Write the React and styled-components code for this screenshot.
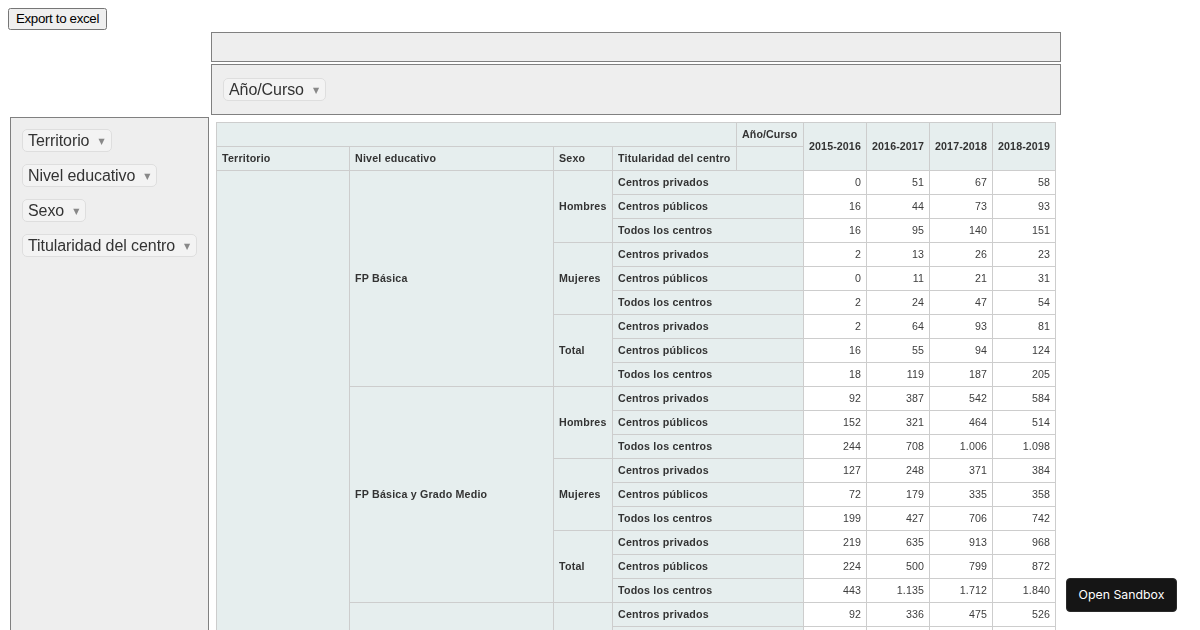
import React from "react";
import styled, { createGlobalStyle } from "styled-components";

const GlobalStyle = createGlobalStyle`
  html, body {
    height: 630px;
    overflow: hidden;
  }
  body {
    margin: 8px;
    font-family: "Liberation Sans", Arial, sans-serif;
  }
`;

const COL_WIDTHS = [133, 204, 59, 124, 67, 63, 63, 63, 63];
const YEARS = ["2015-2016", "2016-2017", "2017-2018", "2018-2019"];
const CENTROS = ["Centros privados", "Centros públicos", "Todos los centros"];

const GROUPS = [
  {
    nivel: "FP Básica",
    sexos: [
      { sexo: "Hombres", rows: [["0", "51", "67", "58"], ["16", "44", "73", "93"], ["16", "95", "140", "151"]] },
      { sexo: "Mujeres", rows: [["2", "13", "26", "23"], ["0", "11", "21", "31"], ["2", "24", "47", "54"]] },
      { sexo: "Total", rows: [["2", "64", "93", "81"], ["16", "55", "94", "124"], ["18", "119", "187", "205"]] },
    ],
  },
  {
    nivel: "FP Básica y Grado Medio",
    sexos: [
      { sexo: "Hombres", rows: [["92", "387", "542", "584"], ["152", "321", "464", "514"], ["244", "708", "1.006", "1.098"]] },
      { sexo: "Mujeres", rows: [["127", "248", "371", "384"], ["72", "179", "335", "358"], ["199", "427", "706", "742"]] },
      { sexo: "Total", rows: [["219", "635", "913", "968"], ["224", "500", "799", "872"], ["443", "1.135", "1.712", "1.840"]] },
    ],
  },
];

// the third group runs past the bottom of the page, only its first row has readable text
const CUT_ROW = ["92", "336", "475", "526"];

const Toolbar = styled.div`
  height: 22px;
`;

const ExportButton = styled.button`
  box-sizing: border-box;
  width: 99px;
  height: 22px;
  padding: 0 0 2px;
  font-family: "Liberation Sans", Arial, sans-serif;
  font-size: 13.33px;
  letter-spacing: -0.34px;
`;

const PivotUi = styled.table`
  table-layout: fixed;
  width: 1053px;
  will-change: transform;
`;

const AxisCell = styled.td`
  box-sizing: border-box;
  height: ${(p) => p.$height || "auto"};
  padding: ${(p) => p.$pad || "5px"};
  background: #eeeeee;
  border: 1px solid #808080;
  vertical-align: top;
`;

const OutputCell = styled.td`
  padding: 5px;
  vertical-align: top;
`;

const AttrList = styled.ul`
  list-style: none;
  margin: 0;
  padding: 0;
`;

const AttrItem = styled.li`
  height: 19px;
  padding: 8px 6px;
  font-size: 16px;
  line-height: 19px;
  letter-spacing: -0.08px;
  white-space: nowrap;
`;

const Attr = styled.span`
  padding: 2px 5px;
  background: #f3f3f3;
  border: 1px solid #dedede;
  border-radius: 5px;
  color: #333333;
`;

const Triangle = styled.span`
  position: relative;
  top: -2px;
  margin-left: 9px;
  margin-right: 1px;
  font-family: "DejaVu Sans", sans-serif;
  font-size: 8px;
  color: #888888;
`;

const PivotTable = styled.table`
  table-layout: fixed;
  width: 839px;
  border-collapse: collapse;
  font-size: 10.67px;
  text-align: left;
`;

const HeadCell = styled.th`
  box-sizing: border-box;
  height: 24px;
  padding: 4px 5px 6px;
  background: #e6eeee;
  border: 1px solid #cdcdcd;
  color: #333333;
  font-size: 10.67px;
  font-weight: bold;
  letter-spacing: ${(p) => (p.$digits ? "0.1px" : "0.2px")};
  text-align: ${(p) => p.$align || "left"};
  vertical-align: middle;
  white-space: nowrap;
`;

const ValueCell = styled.td`
  box-sizing: border-box;
  height: 24px;
  padding: 4px 5px 6px;
  background: #ffffff;
  border: 1px solid #cdcdcd;
  color: #3d3d3d;
  letter-spacing: 0.1px;
  text-align: right;
  vertical-align: middle;
`;

const SandboxButton = styled.a`
  position: fixed;
  right: 23px;
  bottom: 18px;
  box-sizing: border-box;
  width: 111px;
  height: 34px;
  background: #151515;
  border: 1px solid #2a2a2a;
  border-radius: 4px;
  color: #ffffff;
  font-family: Inter, "Liberation Sans", sans-serif;
  font-size: 12.3px;
  line-height: 32px;
  text-align: center;
`;

const Axis = ({ names }) => (
  <AttrList>
    {names.map((name) => (
      <AttrItem key={name}>
        <Attr>
          {name}
          <Triangle>▼</Triangle>
        </Attr>
      </AttrItem>
    ))}
  </AttrList>
);

const Values = ({ row }) =>
  row.map((value, i) => <ValueCell key={i}>{value}</ValueCell>);

const bodyRows = () => {
  const rows = [];
  GROUPS.forEach((group, g) => {
    group.sexos.forEach((s, si) => {
      s.rows.forEach((row, ri) => {
        rows.push(
          <tr key={`${g}-${si}-${ri}`}>
            {g === 0 && si === 0 && ri === 0 && <HeadCell rowSpan={20} />}
            {si === 0 && ri === 0 && <HeadCell rowSpan={9}>{group.nivel}</HeadCell>}
            {ri === 0 && <HeadCell rowSpan={3}>{s.sexo}</HeadCell>}
            <HeadCell colSpan={2}>{CENTROS[ri]}</HeadCell>
            <Values row={row} />
          </tr>
        );
      });
    });
  });
  rows.push(
    <tr key="cut-0">
      <HeadCell rowSpan={2} />
      <HeadCell rowSpan={2} />
      <HeadCell colSpan={2}>{CENTROS[0]}</HeadCell>
      <Values row={CUT_ROW} />
    </tr>,
    <tr key="cut-1">
      <HeadCell colSpan={2} />
      <Values row={["", "", "", ""]} />
    </tr>
  );
  return rows;
};

export default function App() {
  return (
    <>
      <GlobalStyle />
      <Toolbar>
        <ExportButton>Export to excel</ExportButton>
      </Toolbar>
      <PivotUi>
        <colgroup>
          <col width="199" />
          <col width="850" />
        </colgroup>
        <tbody>
          <tr>
            <td />
            <AxisCell $height="30px" />
          </tr>
          <tr>
            <td />
            <AxisCell $height="51px" $pad="7px 5px 3px">
              <Axis names={["Año/Curso"]} />
            </AxisCell>
          </tr>
          <tr>
            <AxisCell>
              <Axis names={["Territorio", "Nivel educativo", "Sexo", "Titularidad del centro"]} />
            </AxisCell>
            <OutputCell>
              <PivotTable>
                <colgroup>
                  {COL_WIDTHS.map((w, i) => (
                    <col key={i} width={w} />
                  ))}
                </colgroup>
                <thead>
                  <tr>
                    <HeadCell colSpan={4} />
                    <HeadCell $digits>Año/Curso</HeadCell>
                    {YEARS.map((y) => (
                      <HeadCell key={y} rowSpan={2} $align="center" $digits>
                        {y}
                      </HeadCell>
                    ))}
                  </tr>
                  <tr>
                    <HeadCell>Territorio</HeadCell>
                    <HeadCell>Nivel educativo</HeadCell>
                    <HeadCell>Sexo</HeadCell>
                    <HeadCell>Titularidad del centro</HeadCell>
                    <HeadCell />
                  </tr>
                </thead>
                <tbody>{bodyRows()}</tbody>
              </PivotTable>
            </OutputCell>
          </tr>
        </tbody>
      </PivotUi>
      <SandboxButton>Open Sandbox</SandboxButton>
    </>
  );
}
